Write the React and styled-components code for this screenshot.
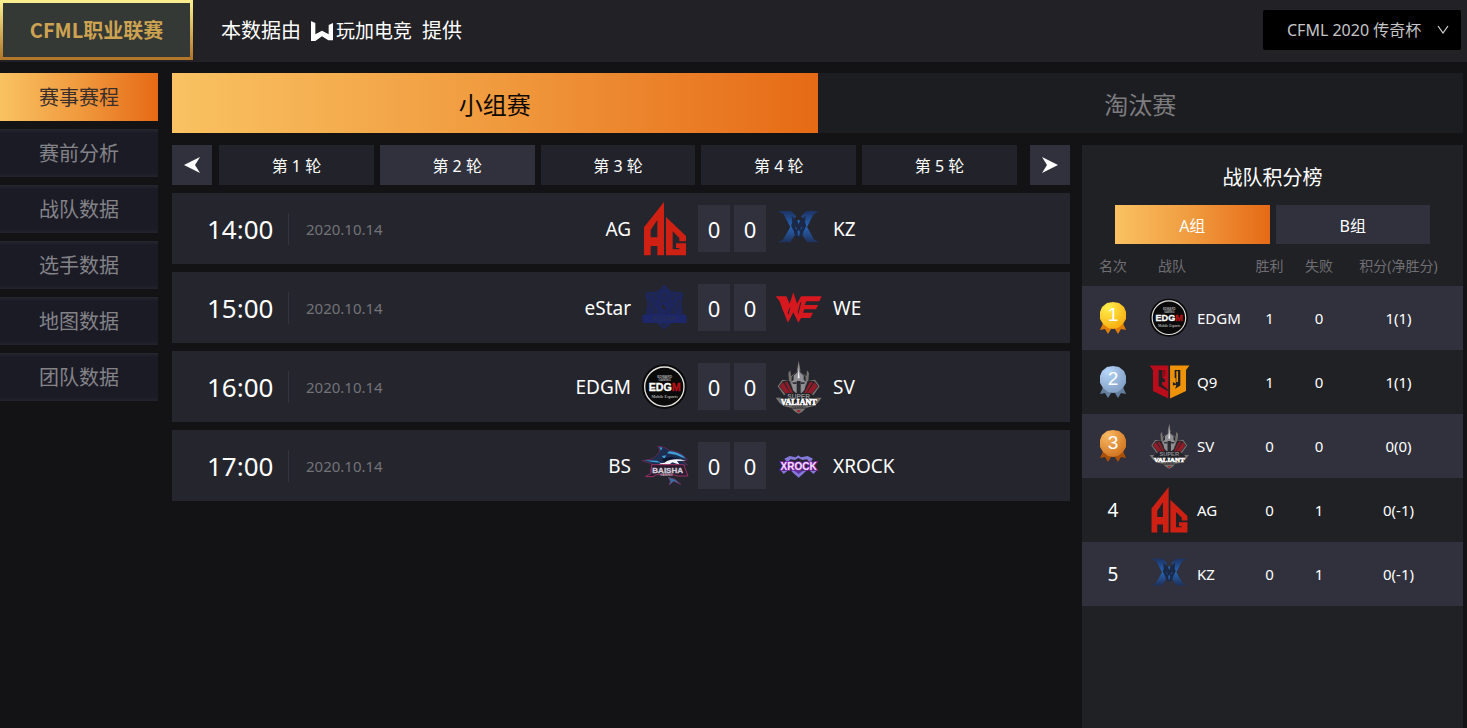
import React from "react";
import styled, { createGlobalStyle, css } from "styled-components";

const GlobalStyle = createGlobalStyle`
  *, *::before, *::after { box-sizing: border-box; }
  body {
    margin: 0;
    background: #131315;
    color: #fff;
    font-family: "Noto Sans", "Noto Sans CJK SC", sans-serif;
    font-size: 16px;
  }
  button, select { font-family: inherit; }
`;

const orange = "linear-gradient(90deg, #f9c262 0%, #f09a3e 50%, #e66a16 100%)";

const Page = styled.div`
  min-height: 100vh;
  display: flex;
  flex-direction: column;
`;

const Header = styled.header`
  display: flex;
  align-items: flex-start;
  height: 62px;
  padding-right: 6px;
  background: #222226;
`;

const LeagueBadge = styled.a`
  display: flex;
  align-items: center;
  justify-content: center;
  width: 193px;
  height: 60px;
  border: 3px solid;
  border-image: linear-gradient(#fbee8e, #b3762a) 1;
  background: #353935;
  color: #cda352;
  font: bold 20px/28px "Noto Sans CJK SC", sans-serif;
  text-decoration: none;
`;

const Provider = styled.p`
  display: flex;
  align-items: center;
  gap: 10px;
  height: 62px;
  margin: 0 0 0 28px;
  font-size: 20px;
  line-height: 28px;
`;

const ProviderBrand = styled.span`
  display: flex;
  align-items: center;
  gap: 3px;
  font-size: 19px;
`;

const SeasonPicker = styled.label`
  position: relative;
  margin: 10px 0 0 auto;
  svg {
    position: absolute;
    right: 12px;
    top: 15px;
    pointer-events: none;
  }
`;

const SeasonSelect = styled.select`
  appearance: none;
  width: 198px;
  height: 40px;
  padding: 0 24px;
  border: 0;
  border-radius: 2px;
  background: #000;
  color: #c6c6c6;
  font-size: 16px;
`;

const Body = styled.div`
  flex: 1;
  display: flex;
  gap: 14px;
  padding: 11px 4px 0 0;
`;

const SideNav = styled.nav`
  display: flex;
  flex-direction: column;
  gap: 8px;
  flex: 0 0 158px;
`;

const SideLink = styled.a`
  display: flex;
  align-items: center;
  justify-content: center;
  height: 48px;
  padding-top: 2px;
  font-size: 20px;
  line-height: 28px;
  text-decoration: none;
  color: ${(p) => (p.$active ? "#3b2f2c" : "#838388")};
  background: ${(p) =>
    p.$active
      ? orange
      : "linear-gradient(#252631, #1b1b26 4px, #1b1b26 44px, #23242e)"};
`;

const Main = styled.main`
  flex: 1;
  display: flex;
  flex-direction: column;
  gap: 12px;
  min-width: 0;
`;

const StageTabs = styled.div`
  display: grid;
  grid-template-columns: 1fr 1fr;
`;

const StageTab = styled.button`
  height: 60px;
  padding: 0;
  border: 0;
  font-size: 24px;
  color: ${(p) => (p.$active ? "#0e0a06" : "#7c7c7f")};
  background: ${(p) => (p.$active ? orange : "#1c1d21")};
`;

const Columns = styled.div`
  flex: 1;
  display: grid;
  grid-template-columns: 898fr 381fr;
  gap: 12px;
`;

const Schedule = styled.section`
  display: flex;
  flex-direction: column;
  gap: 8px;
`;

const RoundBar = styled.div`
  display: flex;
`;

const ArrowButton = styled.button`
  display: flex;
  align-items: center;
  justify-content: center;
  width: 40px;
  height: 40px;
  padding: 0;
  border: 0;
  background: #30313c;
`;

const Rounds = styled.div`
  flex: 1;
  display: grid;
  grid-template-columns: repeat(5, 1fr);
  gap: 6px;
  margin: 0 13px 0 7px;
`;

const RoundButton = styled.button`
  height: 40px;
  padding: 0;
  border: 0;
  color: #fff;
  font-size: 16px;
  background: ${(p) => (p.$active ? "#30313c" : "#22232a")};
`;

const MatchRow = styled.article`
  display: grid;
  grid-template-columns: 117px 105px 1fr 68px 1fr;
  align-items: center;
  height: 71px;
  background: #24252d;
`;

const MatchTime = styled.time`
  height: 32px;
  padding-left: 35px;
  border-right: 1px solid #33343e;
  font-size: 26px;
  line-height: 32px;
`;

const MatchDate = styled.time`
  padding-left: 17px;
  color: #737377;
  font-size: 15px;
`;

const Side = styled.div`
  display: flex;
  align-items: center;
  gap: 10px;
  padding: 0 9px;
  font-size: 19px;
  flex-direction: ${(p) => (p.$home ? "row-reverse" : "row")};
`;

const Scores = styled.div`
  display: flex;
  gap: 4px;
`;

const Score = styled.span`
  flex: 1;
  height: 47px;
  background: #30313d;
  font-size: 22px;
  line-height: 48px;
  text-align: center;
`;

const Crest = styled.svg`
  display: block;
  flex: none;
  width: ${(p) => (p.$small ? 41 : 48)}px;
  height: ${(p) => (p.$small ? 48 : 56)}px;
`;

const Ranking = styled.section`
  background: #202125;
`;

const RankingTitle = styled.h2`
  margin: 0;
  padding-top: 19px;
  font-size: 20px;
  font-weight: 400;
  line-height: 28px;
  text-align: center;
`;

const GroupTabs = styled.div`
  display: grid;
  grid-template-columns: 1fr 1fr;
  gap: 6px;
  margin: 13px 33px 0;
`;

const GroupTab = styled.button`
  height: 39px;
  padding: 0;
  border: 0;
  color: #fff;
  font-size: 16px;
  background: ${(p) => (p.$active ? orange : "#30313d")};
`;

const Table = styled.table`
  width: 100%;
  table-layout: fixed;
  border-collapse: collapse;
  font-size: 15px;
  tbody tr:nth-child(odd) { background: #30313c; }
`;

const cellPlace = css`
  padding: 0;
  text-align: center;
  &:nth-child(1) { width: 62px; }
  &:nth-child(2) { width: 101px; text-align: left; }
  &:nth-child(3) { width: 49px; }
  &:nth-child(4) { width: 50px; }
  &:nth-child(5) { padding-right: 10px; }
`;

const HeadCell = styled.th`
  ${cellPlace}
  height: 42px;
  color: #6f6f73;
  font-size: 14px;
  font-weight: 400;
  &:nth-child(2) { padding-left: 14px; }
`;

const Cell = styled.td`
  ${cellPlace}
  height: 64px;
`;

const RankNumber = styled.span`
  font-size: 19px;
`;

const TeamCell = styled.div`
  display: flex;
  align-items: center;
  gap: 7px;
  padding-left: 5px;
`;

const MedalSvg = styled.svg`
  display: block;
  margin: 0 auto;
`;

/* Team crests share a 144 × 168 canvas. */

const AgMark = () => (
  <g transform="translate(9 3)" fill="#cf2113" fillRule="evenodd">
    <path d="M0 76 60 0V160H40V132H20V160H0ZM20 84V106H40V54Z" />
    <path d="M66 45 126 102V118H106V108L86 88V142H106V138H96V124H126V160H66Z" />
  </g>
);

const KzMark = ({ id }) => (
  <g>
    <defs>
      <linearGradient id={id} x1="0" y1="0" x2="0" y2="1">
        <stop offset="0" stopColor="#1d3263" />
        <stop offset=".5" stopColor="#2766b8" />
        <stop offset="1" stopColor="#1f305a" />
      </linearGradient>
    </defs>
    <path fill={`url(#${id})`} d="M8 30H48L64 46 54 56 52 68 58 84 60 102 46 124H8L24 116 46 78 26 40Z" />
    <path fill={`url(#${id})`} d="M132 30H94L78 46 88 56 90 68 84 84 82 102 96 124H134L118 116 96 78 116 40Z" />
    <path fill="#1b2947" d="M50 44 62 56 71 60 80 56 92 44 90 64 94 74 86 90 80 106 71 112 62 106 56 90 48 74 52 64Z" />
    <path fill="#2a6fc4" d="M67 58H75L71 70Z" />
    <path fill="#2458a0" d="M58 76 66 82 64 86ZM84 76 76 82 78 86ZM67 92 71 86 75 92 73 104H69Z" />
  </g>
);

const EstarMark = () => (
  <g fill="none" stroke="#1d2764" strokeWidth="4">
    <path fill="#20274a" d="M70 17 88 36 124 40 118 72 124 104 90 128 70 146 50 128 16 104 22 72 16 40 52 36Z" />
    <path d="M70 30 94 66 122 46 112 104H28L18 46 46 66Z" />
    <ellipse cx="70" cy="72" rx="20" ry="42" />
    <ellipse cx="70" cy="76" rx="44" ry="18" transform="rotate(35 70 76)" />
    <ellipse cx="70" cy="76" rx="44" ry="18" transform="rotate(-35 70 76)" />
    <circle cx="70" cy="80" r="13" fill="#1d2764" />
    <path fill="#24252d" stroke="none" d="M70 71a9 9 0 1 0 9 13 9 9 0 0 1-9-13Z" />
    <rect x="4" y="104" width="133" height="25" rx="5" fill="#1d276a" stroke="none" />
    <text x="70" y="124" fill="#272e50" stroke="none" fontSize="21" fontWeight="900" fontFamily="Liberation Sans, sans-serif" textAnchor="middle">ESTAR</text>
  </g>
);

const WeMark = () => (
  <g fill="#d8181f" transform="translate(2 37)">
    <path d="M0 12H32L42 34 53 0 64 34 76 12H138L131 27H92L87 38H127L121 51H86L82 61H112L104 77H76L68 91 53 60 37 91 20 50 12 27Z" />
    <path fill="#24252d" d="M41 48 44 44 39 68 36 62ZM74 30 77 30 68 66 66 60Z" />
  </g>
);

const EdgmMark = () => (
  <g>
    <circle cx="70" cy="83" r="67" fill="#0a0a0b" />
    <circle cx="70" cy="83" r="59" fill="none" stroke="#e4e2df" strokeWidth="4" />
    <g textAnchor="middle" fontFamily="Liberation Sans, sans-serif" fill="#a9a9a9">
      <text x="71" y="56" fontSize="10" fontWeight="700">EDWARD</text>
      <text x="71" y="65" fontSize="9" fontWeight="700">GAMING</text>
      <text x="71" y="95" fontSize="32" fontWeight="900" fill="#fff" stroke="#fff">
        EDG<tspan fill="#b91318" stroke="#b91318">M</tspan>
      </text>
      <text x="71" y="116" fontSize="12" fontFamily="Liberation Serif, serif" fontWeight="700">Mobile Esports</text>
    </g>
  </g>
);

const SvMark = () => (
  <g>
    <path fill="#77736f" d="M71 5 77 38 94 52 96 34 102 42 100 66 120 62 134 82 110 116 140 116 128 132 114 142 94 146 82 158 71 164 60 158 48 146 28 142 14 132 2 116 32 116 8 82 22 62 42 66 40 42 46 34 48 52 65 38Z" />
    <path fill="#292a30" d="M71 30 92 54V98L80 118H62L50 98V54Z" />
    <path fill="#24252c" d="M12 82 24 66H44L60 112H36ZM130 82 118 66H98L82 112H106Z" />
    <path fill="#8e1d29" d="M14 82 24 70 50 108 38 112ZM28 68 38 70 56 106 52 110ZM128 82 118 70 92 108 104 112ZM114 68 104 70 86 106 90 110Z" />
    <path fill="#8f8f93" d="M71 10 75 40 86 50V62L94 70 88 94 77 104V66H65V104L54 94 48 70 56 62V50L67 40Z" />
    <path fill="#efeff1" d="M71 28 74 58H68Z" />
    <path fill="#33343a" d="M52 70H65V75H54ZM77 70H90L88 75H77Z" />
    <path fill="#24242a" d="M36 102H106L128 120 114 140H28L14 120Z" />
    <g textAnchor="middle" fontWeight="900">
      <text x="71" y="119" fill="#88888d" fontSize="20" fontFamily="Liberation Sans, sans-serif">SUPER</text>
      <text x="71" y="139" fill="#fff" stroke="#fff" strokeWidth="2" fontSize="24" fontFamily="Liberation Serif, serif">VALIANT</text>
      <text x="71" y="151" fill="#2a2a30" fontSize="11" fontFamily="Liberation Sans, sans-serif">GAMING</text>
    </g>
    <path fill="#a51d2a" d="M64 154H78L71 161Z" />
  </g>
);

const BsMark = () => (
  <g>
    <path fill="#1d2d50" stroke="#7b2a5c" strokeWidth="2" d="M3 68 36 62 54 44 56 36 50 24 70 28 86 37C112 40 130 50 139 66L126 70 139 80 112 86 84 78 48 90 28 100 34 78Z" />
    <path fill="#3f9fd6" d="M55 27 64 29 60 38ZM84 40C108 42 124 50 134 62L104 50 78 46ZM10 67 48 68 60 74 34 72ZM62 54 76 52 70 62Z" />
    <path fill="#0e1730" d="M64 62 92 56 112 62 84 68 70 76Z" />
    <path fill="#f4f5fa" d="M70 74C88 62 112 62 134 68L108 69 116 80 94 73 76 86 46 86 58 76Z" />
    <path fill="#2b1d30" stroke="#9a3162" strokeWidth="3" d="M32 80H128L141 114H108L98 110H46L36 116H14L30 106Z" />
    <text x="80" y="105" textAnchor="middle" fill="#d5cfdc" stroke="#d5cfdc" strokeWidth="1" fontSize="24" fontWeight="900" fontFamily="Liberation Sans, sans-serif">BAISHA</text>
    <text x="76" y="114" textAnchor="middle" fill="#bda7b5" fontSize="9" fontWeight="700" fontFamily="Liberation Sans, sans-serif">GAMING</text>
    <path fill="#2f75a8" stroke="#7b2a5c" strokeWidth="2" d="M82 118 102 124 120 140 98 130 84 142 88 130Z" />
  </g>
);

const XrockMark = () => (
  <g>
    <path fill="#8478d8" d="M28 62 44 54 62 58 70 52 78 58 98 54 114 62 104 74 96 64 82 66 70 60 60 66 46 64 38 74Z" />
    <path fill="#8478d8" d="M48 98H94L84 108 71 119 58 108ZM18 98 38 98 26 108ZM124 98 104 98 116 108Z" />
    <path fill="#5d2fa2" d="M58 98H84L71 108Z" />
    <text x="71" y="95" textAnchor="middle" fill="#f3dffb" stroke="#8a2cba" strokeWidth="5" paintOrder="stroke" fontSize="30" fontWeight="900" fontFamily="Liberation Sans, sans-serif">XROCK</text>
  </g>
);

const Q9Mark = () => (
  <g>
    <path fill="#b90d1c" d="M2 26H68V142L14 116V42Z" />
    <path fill="#ee9208" d="M142 26H74V142L130 116V42Z" />
    <path fill="#202125" d="M34 42H46V66L56 76V84H46V94L66 110V116L34 98Z" />
    <path fill="#8c0b16" d="M46 42H58V62L46 68Z" />
    <path fill="#202125" d="M90 42H110V96L92 108 96 94 84 96V84L94 90V70H90Z" />
    <path fill="#ee9208" d="M96 46H102V84H96Z" />
  </g>
);

const marks = {
  AG: AgMark,
  KZ: KzMark,
  eStar: EstarMark,
  WE: WeMark,
  EDGM: EdgmMark,
  SV: SvMark,
  BS: BsMark,
  XROCK: XrockMark,
  Q9: Q9Mark,
};

function TeamCrest({ team, small }) {
  const Mark = marks[team];
  return (
    <Crest viewBox="0 0 144 168" $small={small} aria-hidden="true">
      <Mark id={small ? "crest-blue-small" : "crest-blue"} />
    </Crest>
  );
}

const medalColors = {
  1: ["#fff04f", "#f8a90c", "#e07d09"],
  2: ["#b5d5fa", "#7f9cc0", "#65809f"],
  3: ["#f9b963", "#cf701c", "#a94f08"],
};

function Medal({ rank }) {
  const [light, deep, ribbon] = medalColors[rank];
  return (
    <MedalSvg width="28" height="34" viewBox="0 0 28 34" role="img" aria-label={`第${rank}名`}>
      <defs>
        <radialGradient id={`medal-${rank}`} cx=".3" cy=".2" r=".9">
          <stop offset="0" stopColor={light} />
          <stop offset="1" stopColor={deep} />
        </radialGradient>
      </defs>
      <path fill={ribbon} d="M5 20 1 29 6 28 9 33 14 25 19 33 22 28 27 29 23 20Z" />
      <path
        fill={`url(#medal-${rank})`}
        d="M14 1 20 2 25 6 27 11 27 18 24 23 19 27 14 28 9 27 4 23 1 18 1 11 3 6 8 2Z"
      />
      <text x="14" y="20" textAnchor="middle" fill="#fff" fontSize="19" fontFamily="Liberation Sans, sans-serif">
        {rank}
      </text>
    </MedalSvg>
  );
}

const ArrowHead = ({ flip }) => (
  <svg width="16" height="16" viewBox="0 0 16 16" aria-hidden="true">
    <path fill="#fff" d={flip ? "M16 8 0 0 5 8 0 16Z" : "M0 8 16 0 11 8 16 16Z"} />
  </svg>
);

const sections = ["赛事赛程", "赛前分析", "战队数据", "选手数据", "地图数据", "团队数据"];

const matches = [
  { time: "14:00", home: "AG", away: "KZ" },
  { time: "15:00", home: "eStar", away: "WE" },
  { time: "16:00", home: "EDGM", away: "SV" },
  { time: "17:00", home: "BS", away: "XROCK" },
];

const standings = [
  { team: "EDGM", win: 1, loss: 0, points: "1(1)" },
  { team: "Q9", win: 1, loss: 0, points: "1(1)" },
  { team: "SV", win: 0, loss: 0, points: "0(0)" },
  { team: "AG", win: 0, loss: 1, points: "0(-1)" },
  { team: "KZ", win: 0, loss: 1, points: "0(-1)" },
];

export default function App() {
  return (
    <Page>
      <GlobalStyle />
      <Header>
        <LeagueBadge href="#league">CFML职业联赛</LeagueBadge>
        <Provider>
          本数据由
          <ProviderBrand>
            <svg width="22" height="20" viewBox="0 0 66 60" aria-hidden="true">
              <path fill="#fff" d="M0 0 13 6V40L33 29 53 40V12L66 6V58L52 58 33 46 13 60H0Z" />
            </svg>
            玩加电竞
          </ProviderBrand>
          提供
        </Provider>
        <SeasonPicker>
          <SeasonSelect aria-label="赛季" defaultValue="2020">
            <option value="2020">CFML 2020 传奇杯</option>
          </SeasonSelect>
          <svg width="12" height="10" viewBox="0 0 12 10" aria-hidden="true">
            <path d="M1 1 6 8 11 1" fill="none" stroke="#d8d8d8" strokeWidth="1.2" />
          </svg>
        </SeasonPicker>
      </Header>
      <Body>
        <SideNav aria-label="数据">
          {sections.map((name, i) => (
            <SideLink key={name} href={`#section-${i}`} $active={i === 0}>
              {name}
            </SideLink>
          ))}
        </SideNav>
        <Main>
          <StageTabs>
            <StageTab $active>小组赛</StageTab>
            <StageTab>淘汰赛</StageTab>
          </StageTabs>
          <Columns>
            <Schedule>
              <RoundBar>
                <ArrowButton aria-label="上一页">
                  <ArrowHead />
                </ArrowButton>
                <Rounds>
                  {[1, 2, 3, 4, 5].map((n) => (
                    <RoundButton key={n} $active={n === 2}>{`第 ${n} 轮`}</RoundButton>
                  ))}
                </Rounds>
                <ArrowButton aria-label="下一页">
                  <ArrowHead flip />
                </ArrowButton>
              </RoundBar>
              {matches.map((m) => (
                <MatchRow key={m.time}>
                  <MatchTime>{m.time}</MatchTime>
                  <MatchDate>2020.10.14</MatchDate>
                  <Side $home>
                    <TeamCrest team={m.home} />
                    {m.home}
                  </Side>
                  <Scores>
                    <Score>0</Score>
                    <Score>0</Score>
                  </Scores>
                  <Side>
                    <TeamCrest team={m.away} />
                    {m.away}
                  </Side>
                </MatchRow>
              ))}
            </Schedule>
            <Ranking>
              <RankingTitle>战队积分榜</RankingTitle>
              <GroupTabs>
                <GroupTab $active>A组</GroupTab>
                <GroupTab>B组</GroupTab>
              </GroupTabs>
              <Table>
                <thead>
                  <tr>
                    <HeadCell>名次</HeadCell>
                    <HeadCell>战队</HeadCell>
                    <HeadCell>胜利</HeadCell>
                    <HeadCell>失败</HeadCell>
                    <HeadCell>积分(净胜分)</HeadCell>
                  </tr>
                </thead>
                <tbody>
                  {standings.map((s, i) => (
                    <tr key={s.team}>
                      <Cell>{i < 3 ? <Medal rank={i + 1} /> : <RankNumber>{i + 1}</RankNumber>}</Cell>
                      <Cell>
                        <TeamCell>
                          <TeamCrest team={s.team} small />
                          {s.team}
                        </TeamCell>
                      </Cell>
                      <Cell>{s.win}</Cell>
                      <Cell>{s.loss}</Cell>
                      <Cell>{s.points}</Cell>
                    </tr>
                  ))}
                </tbody>
              </Table>
            </Ranking>
          </Columns>
        </Main>
      </Body>
    </Page>
  );
}
